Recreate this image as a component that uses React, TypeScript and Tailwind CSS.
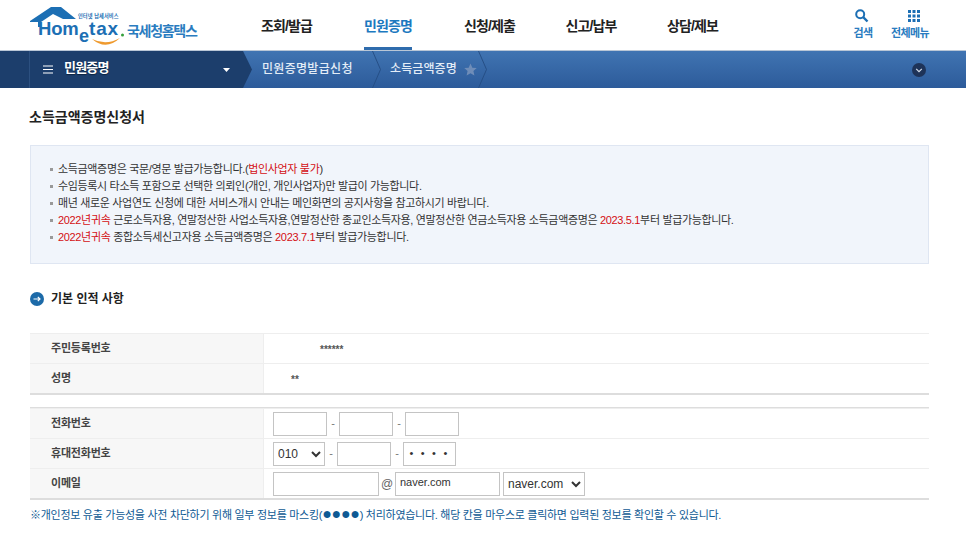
import type { JSX } from 'react';

const menus = ['조회/발급', '민원증명', '신청/제출', '신고/납부', '상담/제보'];

function Logo(): JSX.Element {
  return (
    <svg width="172" height="42" viewBox="0 0 172 42" className="shrink-0">
      <path d="M0 14 L21 0 L31 0 L46 12 L33 12 L23 7 L11 15 L11 20 L8 20 L8 15 L0 15 Z" fill="#1c6fb4" />
      <text x="48" y="11" fontSize="5.2" fill="#1c6fb4" fontWeight="700" letterSpacing="0.1">인터넷 납세서비스</text>
      <text x="8" y="28" fontSize="18.5" fontWeight="700" fill="#1c6fb4" letterSpacing="-0.2">Hom</text>
      <text x="49" y="35" fontSize="18" fontWeight="700" fill="#1c6fb4">e</text>
      <text x="59" y="28" fontSize="19" fontWeight="700" fill="#1c6fb4" letterSpacing="0.8">tax</text>
      <circle cx="92.5" cy="28" r="1.5" fill="#35a03b" />
      <path d="M62 32 Q76 44 90 31 Q76 39 62 32 Z" fill="#ef9a2e" />
      <text x="97" y="29" fontSize="14" fontWeight="700" fill="#2a7cc0" letterSpacing="-1.3">국세청홈택스</text>
    </svg>
  );
}

function Chevron({ color }: { color: string }): JSX.Element {
  return (
    <svg width="9" height="37" viewBox="0 0 9 37" className="shrink-0">
      <path d="M0.5 0 L8.5 18.5 L0.5 37" fill="none" stroke={color} strokeWidth="1" />
    </svg>
  );
}

function Field({ width, value = '', className = '' }: { width: string; value?: string; className?: string }): JSX.Element {
  return (
    <input
      readOnly
      value={value}
      className={`h-6 border border-[#c4c4c4] bg-white px-[4px] text-[11px] text-[#333] outline-none ${width} ${className}`}
    />
  );
}

function Dash(): JSX.Element {
  return <span className="w-3 text-center text-[11px] font-normal text-[#777]">-</span>;
}

function Note({ children }: { children: JSX.Element | (JSX.Element | string)[] | string }): JSX.Element {
  return (
    <li className="flex items-center">
      <i className="mr-[5px] h-[3px] w-[3px] bg-[#999]" />
      <span>{children}</span>
    </li>
  );
}

function Red({ children }: { children: string }): JSX.Element {
  return <b className="font-normal text-[#d40f14]">{children}</b>;
}

function Row({ label, last = false, children }: { label: string; last?: boolean; children: JSX.Element | JSX.Element[] }): JSX.Element {
  return (
    <div className={`flex border-t border-[#eeeeee] ${last ? 'h-[32px] border-b-2 border-b-[#dddddd]' : 'h-[30px]'}`}>
      <div className="flex w-[234px] shrink-0 items-center border-r border-[#eeeeee] bg-[#f7f7f7] pl-[21px] text-[11px] font-bold tracking-[-0.2px] text-[#444]">
        {label}
      </div>
      <div className="flex flex-1 items-center pl-[9px] text-[11px] font-bold text-[#555]">{children}</div>
    </div>
  );
}

export default function App(): JSX.Element {
  return (
    <div className="h-[548px] w-[966px] overflow-hidden bg-white font-['Liberation_Sans','Noto_Sans_CJK_KR',sans-serif] text-[#333]">
      <header className="flex h-[51px] items-start border-b border-[#b9c6d6] pl-[30px]">
        <div className="mt-[7px] w-[230px]">
          <Logo />
        </div>
        <nav className="flex h-[50px] gap-[48.5px]">
          {menus.map((menu, i) => (
            <div key={menu} className="flex h-[50px] w-[53px] justify-center whitespace-nowrap pt-[16px] text-[14px] leading-[20px] font-bold tracking-[-0.9px]">
              <span className={`h-[34px] ${i === 1 ? 'border-b-[3px] border-[#2f6cad] text-[#1c79c0]' : 'text-[#222]'}`}>{menu}</span>
            </div>
          ))}
        </nav>
        <div className="ml-auto mr-[37px] flex gap-[18px] pt-[8px] text-[11px] font-bold tracking-[-0.6px] text-[#2a7cc0]">
          <div className="flex w-[20px] flex-col items-center">
            <svg width="16" height="16" viewBox="0 0 16 16" className="mr-[3px]">
              <circle cx="6.2" cy="6.2" r="4" fill="none" stroke="#1c6fb4" strokeWidth="2" />
              <path d="M9.2 9.2 L13.5 13.5" stroke="#1c6fb4" strokeWidth="2.4" />
            </svg>
            <span className="mt-[1px] whitespace-nowrap">검색</span>
          </div>
          <div className="flex w-[38px] flex-col items-center">
            <svg width="16" height="16" viewBox="0 0 16 16" fill="#1c6fb4" className="ml-[8px]">
              <rect x="2" y="2" width="3" height="3" />
              <rect x="6.5" y="2" width="3" height="3" />
              <rect x="11" y="2" width="3" height="3" />
              <rect x="2" y="6.5" width="3" height="3" />
              <rect x="6.5" y="6.5" width="3" height="3" />
              <rect x="11" y="6.5" width="3" height="3" />
              <rect x="2" y="11" width="3" height="3" />
              <rect x="6.5" y="11" width="3" height="3" />
              <rect x="11" y="11" width="3" height="3" />
            </svg>
            <span className="mt-[1px] whitespace-nowrap">전체메뉴</span>
          </div>
        </div>
      </header>

      <div className="flex h-[37px] items-center bg-gradient-to-b from-[#4074b2] to-[#2d5b9a] text-[12px] text-[#e4edf7]">
        <div className="flex h-full w-[243px] shrink-0 items-center bg-[#1c3e6c]">
          <div className="h-full w-[30px] border-r border-[#2c5080]" />
          <svg width="10" height="9" viewBox="0 0 10 9" className="ml-[13px]">
            <path d="M0 1 H10 M0 4.5 H10 M0 8 H10" stroke="#ffffff" strokeWidth="1.2" />
          </svg>
          <span className="mb-[3px] ml-[11px] text-[13px] font-bold tracking-[-0.8px] text-white [text-shadow:0_1px_1px_#0b2340]">민원증명</span>
          <svg width="7" height="4" viewBox="0 0 7 4" className="ml-[114px]">
            <path d="M0 0 H7 L3.5 4 Z" fill="#ffffff" />
          </svg>
        </div>
        <svg width="9" height="37" viewBox="0 0 9 37" className="shrink-0">
          <path d="M0 0 L9 18.5 L0 37 Z" fill="#1c3e6c" />
        </svg>
        <span className="mb-[2px] ml-[10px] w-[110px] whitespace-nowrap font-medium tracking-[0.3px]">민원증명발급신청</span>
        <Chevron color="#264f86" />
        <span className="mb-[2px] ml-[9px] w-[75px] whitespace-nowrap font-medium tracking-[0.1px]">소득금액증명</span>
        <svg width="13" height="13" viewBox="0 0 24 24" className="-ml-[1px] mr-[1px] shrink-0">
          <path d="M12 1 L15.4 8.6 L23.5 9.4 L17.4 14.8 L19.2 23 L12 18.7 L4.8 23 L6.6 14.8 L0.5 9.4 L8.6 8.6 Z" fill="#6f8db8" />
        </svg>
        <Chevron color="#264f86" />
        <svg width="14" height="14" viewBox="0 0 14 14" className="ml-[425px] shrink-0">
          <circle cx="7" cy="7" r="7" fill="#1e3358" />
          <path d="M4.2 5.8 L7 8.6 L9.8 5.8" fill="none" stroke="#d5deea" strokeWidth="1.2" />
        </svg>
      </div>

      <main className="mx-[30px] w-[899px]">
        <h1 className="-ml-[1px] mt-[19px] h-[20px] text-[14px] leading-[20px] font-bold text-[#222]">소득금액증명신청서</h1>

        <div className="mt-[18px] h-[119px] border border-[#dfe6f2] bg-[#f1f5fb] pt-[15px] pl-[19px] text-[11px] leading-[17px] tracking-[-0.34px] text-[#333]">
          <ul>
            <Note>소득금액증명은 국문/영문 발급가능합니다.(<Red>법인사업자 불가</Red>)</Note>
            <Note>수임등록시 타소득 포함으로 선택한 의뢰인(개인, 개인사업자)만 발급이 가능합니다.</Note>
            <Note>매년 새로운 사업연도 신청에 대한 서비스개시 안내는 메인화면의 공지사항을 참고하시기 바랍니다.</Note>
            <Note><Red>2022년귀속</Red> 근로소득자용, 연말정산한 사업소득자용,연말정산한 종교인소득자용, 연말정산한 연금소득자용 소득금액증명은 <Red>2023.5.1</Red>부터 발급가능합니다.</Note>
            <Note><Red>2022년귀속</Red> 종합소득세신고자용 소득금액증명은 <Red>2023.7.1</Red>부터 발급가능합니다.</Note>
          </ul>
        </div>

        <div className="mt-[25px] flex h-[20px] items-center">
          <svg width="14" height="14" viewBox="0 0 14 14" className="shrink-0">
            <circle cx="7" cy="7" r="7" fill="#1c6aa8" />
            <path d="M3.5 7 H10 M7.8 4.8 L10 7 L7.8 9.2" fill="none" stroke="#ffffff" strokeWidth="1.2" />
          </svg>
          <h2 className="ml-[7px] text-[12px] font-bold text-[#222]">기본 인적 사항</h2>
        </div>

        <section className="mt-[24px]">
          <Row label="주민등록번호">
            <span className="ml-[47px] mt-[1px] text-[10px]">******</span>
          </Row>
          <Row label="성명" last>
            <span className="ml-[18px] mt-[1px] text-[10px]">**</span>
          </Row>
        </section>

        <section className="mt-[12px] border-t border-[#dddddd]">
          <Row label="전화번호">
            <Field width="w-[54px]" />
            <Dash />
            <Field width="w-[54px]" />
            <Dash />
            <Field width="w-[54px]" />
          </Row>
          <Row label="휴대전화번호">
            <select className="h-6 w-[52px] border border-[#c4c4c4] bg-white pl-0 text-[12px] font-normal text-[#333] outline-none">
              <option>010</option>
            </select>
            <Dash />
            <Field width="w-[54px]" />
            <Dash />
            <Field width="w-[53px]" value="• • • •" className="pb-[2px] text-center text-[9px] font-normal tracking-[2.2px]" />
          </Row>
          <Row label="이메일" last>
            <Field width="w-[106px]" />
            <span className="w-4 text-center text-[12px] font-normal text-[#666]">@</span>
            <Field width="w-[105px]" value="naver.com" className="pb-[3px] font-normal" />
            <select className="ml-[3px] h-6 w-[82px] border border-[#c4c4c4] bg-white pl-0 text-[12px] font-normal text-[#333] outline-none">
              <option>naver.com</option>
            </select>
          </Row>
        </section>

        <p className="mt-[7px] whitespace-nowrap text-[11px] leading-[16px] tracking-[-0.28px] text-[#0f5a94]">
          ※개인정보 유출 가능성을 사전 차단하기 위해 일부 정보를 마스킹(<span className="text-[16px] leading-[14px]">●●●●</span>) 처리하였습니다. 해당 칸을 마우스로 클릭하면 입력된 정보를 확인할 수 있습니다.
        </p>
      </main>
    </div>
  );
}
